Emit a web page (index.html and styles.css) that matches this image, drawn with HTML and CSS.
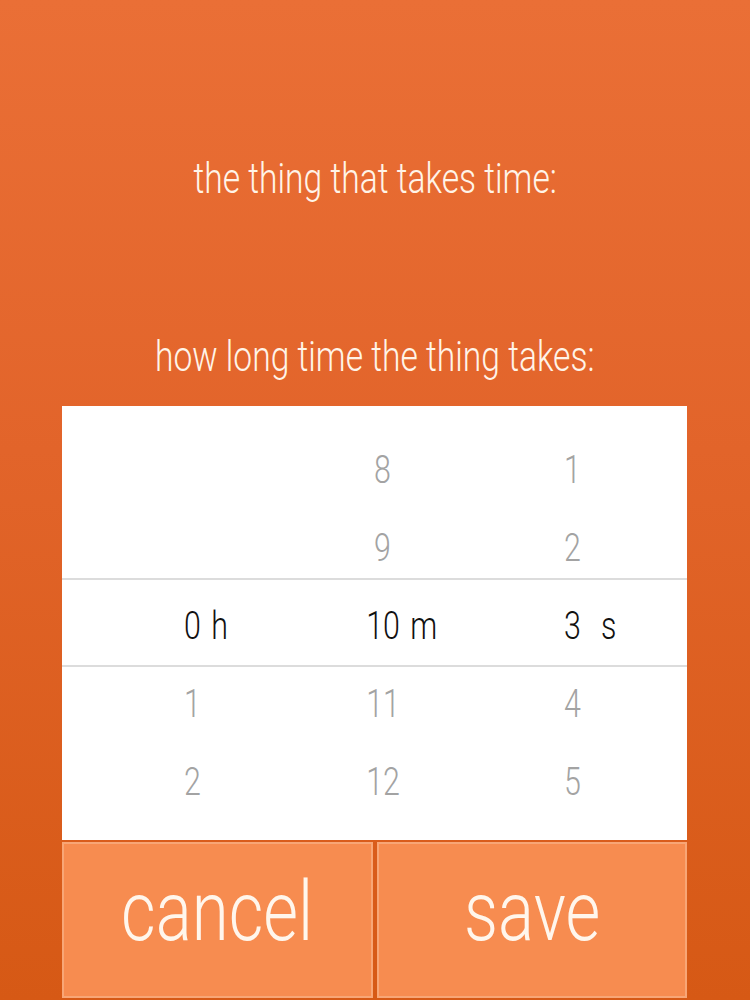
FILE: index.html
```html
<!DOCTYPE html>
<html>
<head>
<meta charset="utf-8">
<link rel="stylesheet" href="styles.css">
</head>
<body>
<div class="screen">
  <div class="label label-thing"><span class="cond">the thing that takes time:</span></div>
  <div class="label label-how"><span class="cond">how long time the thing takes:</span></div>
  <div class="picker">
    <div class="band band-top"></div>
    <div class="band band-bottom"></div>
    <div class="col">
      <div class="row"></div>
      <div class="row"></div>
      <div class="row sel"><span class="num">0<span class="unit unit-h">h</span></span></div>
      <div class="row"><span class="num">1</span></div>
      <div class="row"><span class="num">2</span></div>
    </div>
    <div class="col">
      <div class="row"><span class="num">8</span></div>
      <div class="row"><span class="num">9</span></div>
      <div class="row sel"><span class="num">10<span class="unit unit-m">m</span></span></div>
      <div class="row"><span class="num">11</span></div>
      <div class="row"><span class="num">12</span></div>
    </div>
    <div class="col">
      <div class="row"><span class="num">1</span></div>
      <div class="row"><span class="num">2</span></div>
      <div class="row sel"><span class="num">3<span class="unit unit-s">s</span></span></div>
      <div class="row"><span class="num">4</span></div>
      <div class="row"><span class="num">5</span></div>
    </div>
  </div>
  <div class="buttons">
    <div class="btn"><span class="cond">cancel</span></div>
    <div class="btn"><span class="cond">save</span></div>
  </div>
</div>
</body>
</html>
```
FILE: styles.css
```css
html, body {
  margin: 0;
  padding: 0;
}
body {
  width: 750px;
  height: 1000px;
  overflow: hidden;
  font-family: Roboto, "Liberation Sans", sans-serif;
  font-weight: 300;
}
.screen {
  width: 750px;
  height: 1000px;
  background: linear-gradient(180deg, #ea6f36 0%, #e2642a 45%, #d65915 100%);
  display: flex;
  flex-direction: column;
  padding-top: 154px;
  box-sizing: border-box;
}
.cond {
  display: inline-block;
  transform: scaleX(0.8);
  transform-origin: center;
  white-space: nowrap;
}
.label {
  color: #fff4e8;
  font-size: 42px;
  line-height: 50px;
  text-align: center;
}
.label-how {
  margin-top: 128px;
}
.picker {
  position: relative;
  margin: 24px 0 0 62px;
  width: 625px;
  height: 434px;
  background: #fff;
  box-sizing: border-box;
  padding: 25px 19px 0 36px;
  display: flex;
}
.band {
  position: absolute;
  left: 0;
  right: 0;
  height: 2px;
  background: #dcdcdc;
}
.band-top { top: 172px; }
.band-bottom { top: 259px; }
.col {
  width: 190px;
  display: flex;
  flex-direction: column;
}
.row {
  height: 78px;
  line-height: 78px;
  font-size: 38px;
  text-align: center;
  color: #a3a3a3;
}
.row.sel {
  color: #111;
}
.num {
  position: relative;
  display: inline-block;
  transform: scaleX(0.8);
}
.unit {
  position: absolute;
  left: 100%;
  top: 0;
}
.unit-h { margin-left: 13px; }
.unit-m { margin-left: 13px; }
.unit-s { margin-left: 25px; }
.buttons {
  margin: 2px 0 0 62px;
  width: 625px;
  display: flex;
  gap: 4px;
}
.btn {
  flex: 1;
  height: 156px;
  box-sizing: border-box;
  border: 2px solid #f8a676;
  background: #f78c50;
  color: #fff6ec;
  font-size: 84px;
  display: flex;
  align-items: center;
  justify-content: center;
  padding-bottom: 18px;
}
```
